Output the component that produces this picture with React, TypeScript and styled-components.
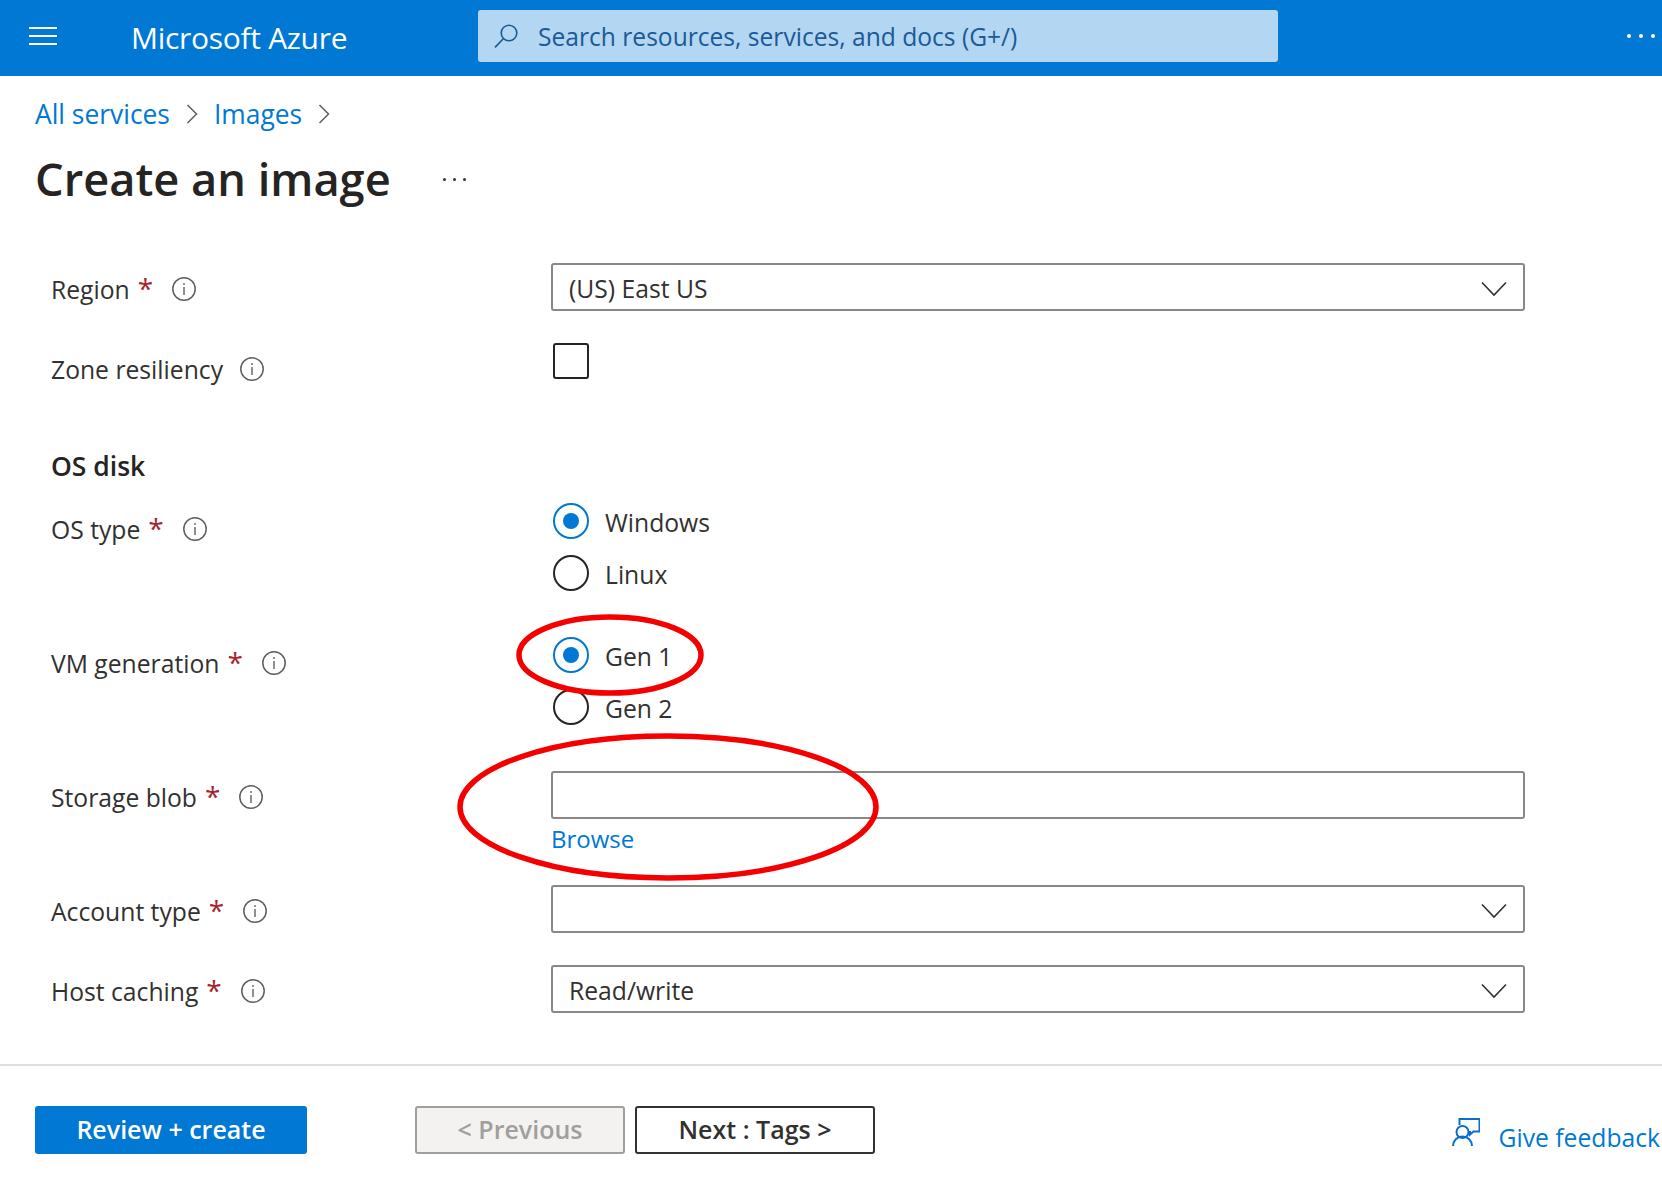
import React from "react";
import styled, { createGlobalStyle } from "styled-components";

const Global = createGlobalStyle`
  html, body { margin: 0; padding: 0; background: #fff; }
  body { font-family: "Open Sans", "Noto Sans", "Liberation Sans", sans-serif; color: #323130; }
  * { box-sizing: border-box; }
`;

const Page = styled.div`
  position: relative;
  width: 1662px;
  height: 1194px;
  overflow: hidden;
  font-size: 24.7px;
`;

const Header = styled.header`
  height: 76px;
  background: #0078d4;
  display: flex;
  align-items: center;
  padding: 0 7px 0 29px;
`;

const Hamburger = styled.div`
  width: 28px;
  height: 18px;
  display: flex;
  flex-direction: column;
  justify-content: space-between;
  margin-bottom: 4px;
  span { display: block; height: 2px; background: #fff; }
`;

const Brand = styled.div`
  width: 347px;
  margin-left: 74px;
  color: #fff;
  font-size: 30px;
  letter-spacing: -0.3px;
  line-height: 1;
`;

const SearchBox = styled.div`
  width: 800px;
  height: 52px;
  margin-bottom: 4px;
  border-radius: 3px;
  background: #b3d6f2;
  display: flex;
  align-items: center;
  padding-left: 16px;
  color: #1b5a96;
  gap: 20px;
  font-size: 24.6px;
`;

const HeaderDots = styled.div`
  margin-left: auto;
  display: flex;
  gap: 8px;
  margin-bottom: 4px;
  span { width: 4px; height: 4px; border-radius: 50%; background: #fff; }
`;

const Crumbs = styled.nav`
  display: flex;
  align-items: center;
  height: 76px;
  padding: 0 0 0 35px;
  margin-bottom: -6px;
`;

const CrumbLink = styled.a`
  color: #0078d4;
  font-size: 26.4px;
  line-height: 1;
`;

const CrumbSep = styled.svg`
  width: 12px;
  height: 22px;
  margin: 0 16px 0 16px;
  flex: none;
`;

const TitleRow = styled.div`
  display: flex;
  align-items: center;
  height: 66px;
  padding-left: 35px;
`;

const Title = styled.h1`
  margin: 0;
  width: 408px;
  font-size: 45.2px;
  font-weight: 600;
  line-height: 1;
  color: #252423;
`;

const TitleDots = styled.div`
  display: flex;
  gap: 7px;
  span { width: 3px; height: 3px; border-radius: 50%; background: #323130; }
`;

const Form = styled.form`
  display: flex;
  flex-direction: column;
  padding: 51px 0 0 51px;
`;

const Row = styled.div<{ $after: number }>`
  display: grid;
  grid-template-columns: 500px 974px;
  margin-bottom: ${(p) => p.$after}px;
`;

const LabelBox = styled.div`
  height: 54px;
  padding-bottom: 2px;
  display: flex;
  align-items: center;
`;

const Req = styled.span`
  color: #a4262c;
  margin: 0 2px 0 8px;
  line-height: 1;
  font-size: 28px;
  transform: translateY(-1px);
`;

const InfoIcon = styled.svg`
  width: 24px;
  height: 24px;
  flex: none;
  margin-left: 17px;
`;

const SectionTitle = styled.div`
  font-weight: 600;
  font-size: 26.5px;
  height: 36px;
  line-height: 36px;
  margin-bottom: 19px;
  color: #252423;
`;

const Field = styled.div`
  width: 974px;
  height: 48px;
  border: 2px solid #8a8886;
  border-radius: 3px;
  display: flex;
  align-items: center;
  justify-content: space-between;
  padding: 0 16px 0 16px;
  background: #fff;
  span { padding-top: 2px; }
`;

const Chevron = styled.svg`
  width: 26px;
  height: 16px;
  margin-top: 3px;
  flex: none;
`;

const Checkbox = styled.div`
  width: 36px;
  height: 36px;
  margin-left: 2px;
  border: 2px solid #252423;
  border-radius: 3px;
`;

const RadioGroup = styled.div`
  display: flex;
  flex-direction: column;
  gap: 16px;
  padding-left: 2px;
`;

const RadioRow = styled.label`
  display: flex;
  align-items: center;
  height: 36px;
  gap: 16px;
  span { padding-top: 2px; }
`;

const RadioDot = styled.div<{ $on?: boolean }>`
  width: 36px;
  height: 36px;
  flex: none;
  border-radius: 50%;
  border: 2px solid ${(p) => (p.$on ? "#0078d4" : "#252423")};
  display: flex;
  align-items: center;
  justify-content: center;
  &::after {
    content: "";
    display: ${(p) => (p.$on ? "block" : "none")};
    width: 16px;
    height: 16px;
    border-radius: 50%;
    background: #0078d4;
  }
`;

const BrowseLink = styled.a`
  display: block;
  color: #0078d4;
  font-size: 24px;
  height: 42px;
  line-height: 40px;
`;

const Footer = styled.footer`
  margin-top: 45px;
  border-top: 2px solid #e1dfdd;
  display: flex;
  align-items: flex-start;
  padding: 40px 2px 0 35px;
`;

const Button = styled.button<{ $kind: "primary" | "disabled" | "outline"; $w: number; $ml: number }>`
  width: ${(p) => p.$w}px;
  height: 48px;
  margin-left: ${(p) => p.$ml}px;
  border-radius: 3px;
  font: 600 25px "Open Sans", "Noto Sans", sans-serif;
  padding: 0 0 2px;
  border: 2px solid
    ${(p) => (p.$kind === "primary" ? "#0078d4" : p.$kind === "disabled" ? "#a19f9d" : "#323130")};
  background: ${(p) => (p.$kind === "primary" ? "#0078d4" : p.$kind === "disabled" ? "#f3f2f1" : "#fff")};
  color: ${(p) => (p.$kind === "primary" ? "#fff" : p.$kind === "disabled" ? "#a19f9d" : "#323130")};
`;

const Feedback = styled.a`
  margin-left: auto;
  display: flex;
  align-items: center;
  gap: 18px;
  height: 28px;
  margin-top: 12px;
  color: #0078d4;
  white-space: nowrap;
  font-size: 24.7px;
`;

const FeedbackText = styled.span`
  padding-top: 10px;
`;

const Annotation = styled.svg`
  position: absolute;
  left: 0;
  top: 0;
  width: 1662px;
  height: 1194px;
  pointer-events: none;
`;

const Info = () => (
  <InfoIcon viewBox="0 0 24 24" fill="none" stroke="#605e5c">
    <circle cx="12" cy="12" r="11.2" strokeWidth="1.5" />
    <path d="M12 10v8" strokeWidth="1.4" />
    <circle cx="12" cy="7" r="0.9" fill="#605e5c" stroke="none" />
  </InfoIcon>
);

const Down = () => (
  <Chevron viewBox="0 0 26 16" fill="none" stroke="#323130" strokeWidth="1.6">
    <path d="M1 1.5 13 14 25 1.5" />
  </Chevron>
);

const Sep = () => (
  <CrumbSep viewBox="0 0 12 22" fill="none" stroke="#605e5c" strokeWidth="1.5">
    <path d="M1.5 2 10.5 11 1.5 20" />
  </CrumbSep>
);

const Label = ({ text, req }: { text: string; req?: boolean }) => (
  <LabelBox>
    {text}
    {req && <Req>*</Req>}
    <Info />
  </LabelBox>
);

export default function App() {
  return (
    <Page>
      <Global />
      <Header>
        <Hamburger>
          <span />
          <span />
          <span />
        </Hamburger>
        <Brand>Microsoft Azure</Brand>
        <SearchBox>
          <svg width="24" height="24" viewBox="0 0 24 24" fill="none" stroke="#1b5a96" strokeWidth="1.6">
            <circle cx="15" cy="9" r="7.8" />
            <path d="M9.5 14.5 1 23.4" />
          </svg>
          Search resources, services, and docs (G+/)
        </SearchBox>
        <HeaderDots>
          <span />
          <span />
          <span />
        </HeaderDots>
      </Header>

      <Crumbs>
        <CrumbLink>All services</CrumbLink>
        <Sep />
        <CrumbLink>Images</CrumbLink>
        <Sep />
      </Crumbs>

      <TitleRow>
        <Title>Create an image</Title>
        <TitleDots>
          <span />
          <span />
          <span />
        </TitleDots>
      </TitleRow>

      <Form>
        <Row $after={26}>
          <Label text="Region" req />
          <Field>
            <span>(US) East US</span>
            <Down />
          </Field>
        </Row>
        <Row $after={51}>
          <Label text="Zone resiliency" />
          <Checkbox />
        </Row>
        <SectionTitle>OS disk</SectionTitle>
        <Row $after={46}>
          <Label text="OS type" req />
          <RadioGroup>
            <RadioRow>
              <RadioDot $on />
              <span>Windows</span>
            </RadioRow>
            <RadioRow>
              <RadioDot />
              <span>Linux</span>
            </RadioRow>
          </RadioGroup>
        </Row>
        <Row $after={46}>
          <Label text="VM generation" req />
          <RadioGroup>
            <RadioRow>
              <RadioDot $on />
              <span>Gen 1</span>
            </RadioRow>
            <RadioRow>
              <RadioDot />
              <span>Gen 2</span>
            </RadioRow>
          </RadioGroup>
        </Row>
        <Row $after={24}>
          <Label text="Storage blob" req />
          <div>
            <Field />
            <BrowseLink>Browse</BrowseLink>
          </div>
        </Row>
        <Row $after={26}>
          <Label text="Account type" req />
          <Field>
            <span />
            <Down />
          </Field>
        </Row>
        <Row $after={0}>
          <Label text="Host caching" req />
          <Field>
            <span>Read/write</span>
            <Down />
          </Field>
        </Row>
      </Form>

      <Footer>
        <Button $kind="primary" $w={272} $ml={0}>Review + create</Button>
        <Button $kind="disabled" $w={210} $ml={108}>&lt; Previous</Button>
        <Button $kind="outline" $w={240} $ml={10}>Next : Tags &gt;</Button>
        <Feedback>
          <svg width="28" height="28" viewBox="0 0 28 28" fill="none" stroke="#0a6ed1" strokeWidth="2">
            <path d="M7.5 7V1H27.5V13.5H21.5L18 16.5V13" />
            <circle cx="10.5" cy="14" r="6" />
            <path d="M1 28a9.5 9.5 0 0 1 19 0" />
          </svg>
          <FeedbackText>Give feedback</FeedbackText>
        </Feedback>
      </Footer>

      <Annotation viewBox="0 0 1662 1194" fill="none" stroke="#f40000" strokeWidth="5.5">
        <ellipse cx="610" cy="655" rx="91" ry="38" />
        <ellipse cx="668" cy="807" rx="208" ry="71" />
      </Annotation>
    </Page>
  );
}
